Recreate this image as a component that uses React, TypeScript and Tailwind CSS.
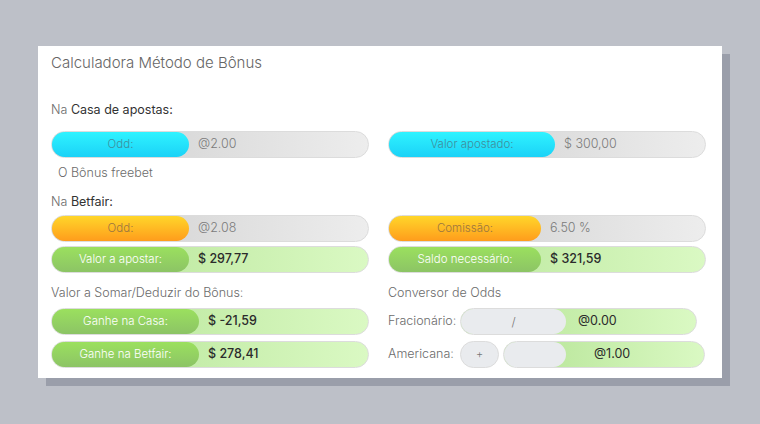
import { ReactNode } from 'react'

type Tone = 'cyan' | 'orange' | 'green'

const labelTone: Record<Tone, string> = {
  cyan: 'bg-gradient-to-b from-[#2ff3ff] to-[#1bd2f7] text-[#3f8e9c]',
  orange: 'bg-gradient-to-b from-[#ffd62a] to-[#ff9c1c] text-[#9a7640]',
  green: 'bg-gradient-to-b from-[#9be05e] to-[#8cc465] text-white',
}

const valueTone: Record<Tone, string> = {
  cyan: 'bg-gradient-to-r from-[#cdcdcd] to-[#ededed]',
  orange: 'bg-gradient-to-r from-[#cdcdcd] to-[#ededed]',
  green: 'bg-gradient-to-r from-[#b4e394] to-[#daf9c3]',
}

const valueText: Record<Tone, string> = {
  cyan: 'text-[#7a7a7a] font-light',
  orange: 'text-[#7a7a7a] font-light',
  green: 'text-[#2b2b2b] font-medium',
}

function Field({ tone, label, value, labelW }: { tone: Tone; label: string; value: string; labelW: string }) {
  return (
    <div className={`flex h-[27px] items-center rounded-full border border-[#dcdcdc] ${valueTone[tone]}`}>
      <div className={`flex h-full shrink-0 items-center justify-center rounded-full text-[11.5px] font-light ${labelW} ${labelTone[tone]}`}>
        {label}
      </div>
      <span className={`pl-[9px] text-[12.5px] ${valueText[tone]}`}>{value}</span>
    </div>
  )
}

function Heading({ children }: { children: ReactNode }) {
  return <div className="text-[12.5px] leading-[20px] font-light text-[#6b6b6b]">{children}</div>
}

export default function App() {
  return (
    <div
      className="h-[424px] w-[760px] bg-[#bdc0c8] pl-[38px] pt-[46px]"
      style={{ fontFamily: 'Inter, "Open Sans", sans-serif' }}
    >
      <div className="flex h-[332px] w-[684px] flex-col bg-white pl-[13px] pr-[16px] pt-[7px] shadow-[8px_8px_0_#9a9eaa]">
        <div className="text-[15px] leading-[20px] font-light text-[#666]">Calculadora Método de Bônus</div>

        <div className="mt-[27px]">
          <Heading>
            Na <span className="font-normal text-[#333]">Casa de apostas:</span>
          </Heading>
        </div>

        <div className="mt-[11px] grid grid-cols-2 gap-x-[19px]">
          <Field tone="cyan" label="Odd:" value="@2.00" labelW="w-[137px]" />
          <Field tone="cyan" label="Valor apostado:" value="$ 300,00" labelW="w-[166px]" />
        </div>

        <div className="mt-[5px] pl-[7px]">
          <Heading>O Bônus freebet</Heading>
        </div>

        <div className="mt-[9px]">
          <Heading>
            Na <span className="font-normal text-[#333]">Betfair:</span>
          </Heading>
        </div>

        <div className="mt-[3px] grid grid-cols-2 gap-x-[19px] gap-y-[4px]">
          <Field tone="orange" label="Odd:" value="@2.08" labelW="w-[137px]" />
          <Field tone="orange" label="Comissão:" value="6.50 %" labelW="w-[152px]" />
          <Field tone="green" label="Valor a apostar:" value="$ 297,77" labelW="w-[137px]" />
          <Field tone="green" label="Saldo necessário:" value="$ 321,59" labelW="w-[152px]" />
        </div>

        <div className="mt-[10px] grid grid-cols-2 gap-x-[19px]">
          <div className="flex flex-col">
            <Heading>Valor a Somar/Deduzir do Bônus:</Heading>
            <div className="mt-[5px] flex flex-col gap-[6px]">
              <Field tone="green" label="Ganhe na Casa:" value="$ -21,59" labelW="w-[147px]" />
              <Field tone="green" label="Ganhe na Betfair:" value="$ 278,41" labelW="w-[147px]" />
            </div>
          </div>

          <div className="flex flex-col">
            <Heading>Conversor de Odds</Heading>
            <div className="mt-[5px] flex h-[27px] items-center">
              <span className="w-[72px] text-[12.5px] font-light text-[#6b6b6b]">Fracionário:</span>
              <div className="flex h-full w-[237px] items-center rounded-full border border-[#dcdcdc] bg-gradient-to-r from-[#b4e394] to-[#daf9c3]">
                <div className="flex h-full w-[105px] shrink-0 items-center justify-center rounded-full bg-[#e9ebee] text-[12px] font-light text-[#777]">
                  /
                </div>
                <span className="pl-[12px] text-[12.5px] font-normal text-[#2b2b2b]">@0.00</span>
              </div>
            </div>
            <div className="mt-[6px] flex h-[27px] items-center">
              <span className="w-[72px] text-[12.5px] font-light text-[#6b6b6b]">Americana:</span>
              <div className="flex h-full w-[39px] shrink-0 items-center justify-center rounded-full border border-[#dcdcdc] bg-[#e9ebee] text-[11px] font-light text-[#777]">
                +
              </div>
              <div className="ml-[4px] flex h-full w-[202px] items-center rounded-full border border-[#dcdcdc] bg-gradient-to-r from-[#b4e394] to-[#daf9c3]">
                <div className="h-full w-[62px] shrink-0 rounded-full bg-[#e9ebee]" />
                <span className="pl-[28px] text-[12.5px] font-normal text-[#2b2b2b]">@1.00</span>
              </div>
            </div>
          </div>
        </div>
      </div>
    </div>
  )
}
